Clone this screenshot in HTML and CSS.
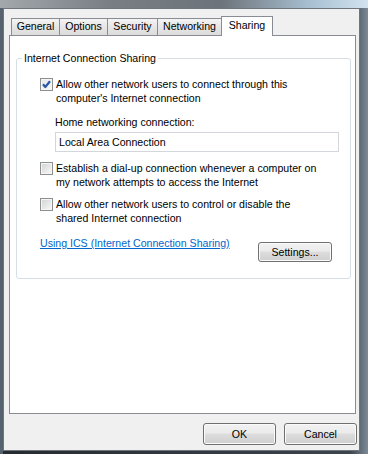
FILE: index.html
```html
<!DOCTYPE html>
<html lang="en">

<head>
    <meta charset="UTF-8">
    <title>Local Area Connection Properties</title>
    <link rel="stylesheet" href="styles.css">
</head>

<body>
    <div class="window">
        <div class="client">
            <div class="tabs">
                <div class="tab tab-general">General</div>
                <div class="tab tab-options">Options</div>
                <div class="tab tab-security">Security</div>
                <div class="tab tab-networking">Networking</div>
                <div class="tab tab-active">Sharing</div>
            </div>

            <div class="page">
                <fieldset class="group">
                    <legend>Internet Connection Sharing</legend>
                    <div class="group-body">
                        <div class="check-row">
                            <span class="checkbox checked">
                                <svg width="11" height="11" viewBox="0 0 11 11">
                                    <path d="M2 5.2 L4.3 8 L9 2.2" fill="none" stroke="#2b55a8" stroke-width="2.2" stroke-linejoin="round" />
                                </svg>
                            </span>
                            <span class="check-text">Allow other network users to connect through this<br>computer's Internet connection</span>
                        </div>

                        <div class="home">
                            <div class="home-label">Home networking connection:</div>
                            <div class="textbox">Local Area Connection</div>
                        </div>

                        <div class="check-row row-dialup">
                            <span class="checkbox"></span>
                            <span class="check-text">Establish a dial-up connection whenever a computer on<br>my network attempts to access the Internet</span>
                        </div>

                        <div class="check-row row-control">
                            <span class="checkbox"></span>
                            <span class="check-text">Allow other network users to control or disable the<br>shared Internet connection</span>
                        </div>

                        <div class="link-row">
                            <a href="#" class="help-link">Using ICS (Internet Connection Sharing)</a>
                            <button class="btn btn-settings">Settings...</button>
                        </div>
                    </div>
                </fieldset>
            </div>

            <div class="dialog-buttons">
                <button class="btn">OK</button>
                <button class="btn">Cancel</button>
            </div>
        </div>
    </div>
</body>

</html>
```

FILE: styles.css
```css
* {
    margin: 0;
    padding: 0;
    box-sizing: border-box;
}

body {
    font-family: 'Liberation Sans', Arial, sans-serif;
    font-size: 10.6px;
    color: #000;
    width: 368px;
    height: 454px;
    overflow: hidden;
    background: #2b3037;
}

.window {
    width: 368px;
    height: 454px;
    padding: 8px 8px 3px 3px;
    display: flex;
    background:
        linear-gradient(90deg, #a3a8ad, #787e84 30%, #6d737a 60%, #a9c2d4 85%, #d3e2ee) top / 100% 8px no-repeat,
        linear-gradient(90deg, #56626d 0, #56626d 3px, #262b31 3px, #3b434b 95%, #7d8b97);
}

.client {
    flex: 1;
    display: flex;
    flex-direction: column;
    background: #f0f0f0;
    border: 1px solid #6f757b;
}

/* tab strip */
.tabs {
    display: flex;
    align-items: flex-end;
    height: 19px;
    margin: 7px 0 0 7px;
    position: relative;
    z-index: 1;
}

.tab {
    height: 17px;
    line-height: 15px;
    text-align: center;
    border: 1px solid #898c95;
    border-bottom: none;
    background: linear-gradient(#f4f4f4, #e6e6e6 50%, #dcdcdc);
    margin-right: -1px;
}

.tab-general { width: 49px; }
.tab-options { width: 49px; }
.tab-security { width: 51px; }
.tab-networking { width: 65px; }

.tab-active {
    width: 52px;
    height: 20px;
    line-height: 17px;
    background: #fff;
    margin-bottom: -1px;
}

/* tab page */
.page {
    height: 379px;
    margin-left: 5px;
    width: 347px;
    background: #fff;
    border: 1px solid #898c95;
    padding: 15px 4px 0 6px;
}

.group {
    border: 1px solid #d5dfe5;
    border-radius: 3px;
}

.group legend {
    margin-left: 5px;
    padding: 0 2px;
    line-height: 14px;
}

.group-body {
    padding: 12px 0 16px 23px;
    line-height: 14px;
}

.check-row {
    display: flex;
    align-items: flex-start;
    gap: 3px;
}

.row-dialup { margin-top: 9px; }
.row-control { margin-top: 8px; }

.checkbox {
    width: 13px;
    height: 13px;
    margin-top: 1px;
    flex: none;
    border: 1px solid #8e8f8f;
    background: linear-gradient(135deg, #cfd1d4, #eeeeee 70%, #f8f8f8);
    box-shadow: inset 0 0 0 1px #f6f6f6;
}

.checkbox.checked {
    background: linear-gradient(135deg, #e4e6e9, #f7f7f7);
}

.checkbox svg {
    display: block;
    margin: 0;
}

.home {
    padding-left: 15px;
    margin-top: 10px;
}

.textbox {
    width: 284px;
    height: 20px;
    margin-top: 3px;
    padding: 0 3px;
    line-height: 18px;
    border: 1px solid #d3d6da;
    background: #fff;
}

.link-row {
    display: flex;
    justify-content: space-between;
    align-items: flex-start;
    margin-top: 11px;
    padding-right: 18px;
}

.help-link {
    color: #0066cc;
    text-decoration: underline;
}

/* push buttons */
.btn {
    font: inherit;
    color: #000;
    width: 73px;
    height: 22px;
    border: 1px solid #707070;
    border-radius: 3px;
    background: linear-gradient(#f2f2f2, #ebebeb 45%, #dddddd 50%, #cfcfcf);
    box-shadow: inset 0 0 0 1px #fbfbfb;
}

.btn-settings {
    width: 74px;
    height: 20px;
    margin-top: 6px;
}

.dialog-buttons {
    display: flex;
    justify-content: flex-end;
    gap: 8px;
    margin: 9px 2px 0 0;
}
```
